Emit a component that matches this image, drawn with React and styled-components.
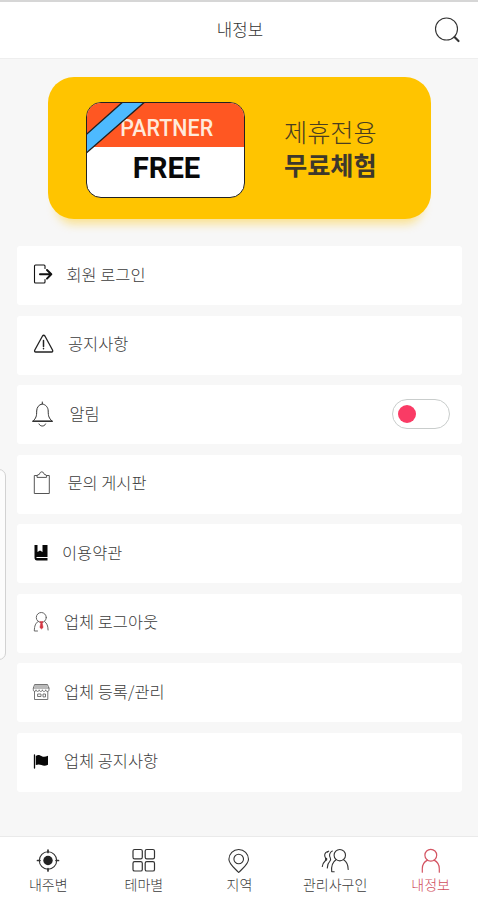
import React from "react";
import styled, { createGlobalStyle } from "styled-components";

const GlobalStyle = createGlobalStyle`
  * { box-sizing: border-box; }
  body {
    margin: 0;
    background: #f7f7f7;
    font-family: "Noto Sans CJK KR", "Noto Sans", sans-serif;
    font-weight: 300;
    color: #444;
  }
`;

const Screen = styled.div`
  position: relative;
  display: flex;
  flex-direction: column;
  width: 478px;
  height: 900px;
  overflow: hidden;
  background: #f7f7f7;
`;

const Header = styled.header`
  display: grid;
  grid-template-columns: 60px 1fr 60px;
  align-items: center;
  height: 59px;
  flex: none;
  background: #fff;
  border-top: 2px solid #d6d6d6;
  border-bottom: 1px solid #eeeeee;
`;

const Title = styled.h1`
  grid-column: 2;
  margin: 0;
  padding: 0 0 3px 2px;
  text-align: center;
  font-size: 16.8px;
  line-height: 24px;
  font-weight: 300;
  color: #333;
`;

const SearchButton = styled.button`
  display: flex;
  justify-content: flex-end;
  padding: 0 18px 0 0;
  border: 0;
  background: none;
`;

const Icon = styled.svg`
  display: block;
  flex: none;
  overflow: visible;
  fill: none;
  stroke: ${(p) => p.$color || "#333"};
  stroke-width: ${(p) => p.$stroke || 1.1};
  stroke-linecap: round;
  stroke-linejoin: round;
`;

const Main = styled.main`
  flex: 1;
  padding: 18px 16px 0 17px;
`;

const Banner = styled.section`
  display: flex;
  align-items: center;
  width: 383px;
  height: 142px;
  margin: 0 0 27px 31px;
  padding: 0 0 0 38px;
  border-radius: 26px;
  background: #ffc400;
  box-shadow: 0 13px 10px -8px rgba(255, 196, 0, 0.42);
`;

const Ticket = styled.div`
  position: relative;
  display: flex;
  flex-direction: column;
  width: 159px;
  height: 96px;
  margin-top: 3px;
  overflow: hidden;
  border: 1.5px solid #222;
  border-radius: 15px;
  background: #fff;
  font-family: Roboto, sans-serif;
  text-align: center;
`;

const TicketTop = styled.div`
  height: 44px;
  padding-left: 2px;
  background: #ff5722;
  color: #ffeadb;
  font-size: 23.4px;
  font-weight: 500;
  line-height: 51px;
`;

const Condensed = styled.span`
  display: inline-block;
  transform: scaleX(0.915);
`;

const TicketBottom = styled.div`
  flex: 1;
  padding-left: 2px;
  color: #090909;
  font-size: 29.2px;
  font-weight: 700;
  line-height: 43px;
`;

const Ribbon = styled.svg`
  position: absolute;
  left: -1px;
  top: -1px;
`;

const Offer = styled.div`
  margin-left: 39px;
  color: #4a3d20;
  font-size: 25.2px;
  line-height: 33px;
`;

const OfferStrong = styled.strong`
  display: block;
  font-weight: 700;
  color: #3d382c;
`;

const Menu = styled.ul`
  display: flex;
  flex-direction: column;
  gap: 10.5px;
  margin: 0;
  padding: 0;
  list-style: none;
`;

const MenuRow = styled.li`
  display: flex;
  align-items: center;
  height: 59px;
  padding: 0 12px 2px 15px;
  border-radius: 3px;
  background: #fff;
`;

const MenuLabel = styled.span`
  margin-left: ${(p) => p.$gap}px;
  padding-bottom: 2px;
  font-size: 16.4px;
  line-height: 24px;
  color: #3c3c3c;
`;

const Switch = styled.span`
  display: flex;
  align-items: center;
  width: 58px;
  height: 30px;
  margin-left: auto;
  padding-left: 5px;
  border: 1px solid #c9cdcc;
  border-radius: 15px;
  background: #fff;
`;

const Knob = styled.span`
  width: 18px;
  height: 18px;
  border-radius: 50%;
  background: #fa3b65;
`;

const EdgeHandle = styled.div`
  position: absolute;
  left: -8px;
  top: 469px;
  width: 14px;
  height: 191px;
  border: 1px solid #d2d2d2;
  border-radius: 7px;
  background: #fcfcfc;
`;

const BottomNav = styled.nav`
  display: flex;
  flex: none;
  height: 64px;
  border-top: 1px solid #eaeaea;
  background: #fff;
`;

const NavItem = styled.a`
  display: flex;
  flex: 1;
  flex-direction: column;
  align-items: center;
  padding: 11px 0 0 1px;
  color: ${(p) => (p.$active ? "#d04e5c" : "#3c3c3c")};
  font-size: 14px;
  line-height: 20px;
`;

const NavLabel = styled.span`
  white-space: nowrap;
`;

const SearchIcon = () => (
  <Icon width="26" height="26" viewBox="0 0 26 26">
    <circle cx="12.500" cy="12" r="11" />
    <path d="M20.500 20 24.500 24" strokeWidth="2.2" />
  </Icon>
);

const LoginIcon = () => (
  <Icon width="20" height="22" viewBox="0 0 20 22" $color="#111">
    <path d="M13 4.500V2Q13 1 12 1H3.500Q2.500 1 2.500 2v16Q2.500 19 3.500 19H12Q13 19 13 18v-2.500" />
    <path d="M8 10.300H19.300M15 6 19.300 10.300l-4.300 4.300" strokeWidth="2" />
  </Icon>
);

const NoticeIcon = () => (
  <Icon width="22" height="20" viewBox="0 0 22 20" $color="#222">
    <path d="M10.500 2Q11.700.500 12.900 2L20.500 16q.800 1.800-1 2H3.800q-1.800-.200-1-2Z" strokeWidth="1.300" />
    <path d="M11.500 6.500v6M11.500 14.600v.200" strokeWidth="1.500" />
  </Icon>
);

const BellIcon = () => (
  <Icon width="22" height="26" viewBox="0 0 22 26" $stroke="1">
    <path d="M10.300 1v2C6.800 3.500 4.700 6.500 4.700 10c0 5.500-.7 7-3.800 10.300h19.300C17 17 16.200 15.500 16.200 10c0-3.500-2.300-6.500-5.900-7" />
    <path d="M.900 20.300h19.300" strokeWidth="1.400" />
    <path d="M7 23c1.200 2.800 5.400 2.800 6.600 0" />
  </Icon>
);

const ClipboardIcon = () => (
  <Icon width="18" height="24" viewBox="0 0 18 24" $color="#555" $stroke="1">
    <path d="M5 4.500H2.300v18h15v-18h-2.700M5 6V5Q5 3.500 7.200 3.500 8 .800 9.800.800t2.600 2.700Q14.600 3.500 14.600 5v1Z" />
  </Icon>
);

const BookIcon = () => (
  <Icon width="16" height="18" viewBox="0 0 16 18" $color="none">
    <path d="M2.500 1h3v7L8 6.500 10.500 8V1h5v12h-11v1h11v2.500H5q-2.500 0-2.500-3Z" fill="#080808" />
  </Icon>
);

const PartnerIcon = () => (
  <Icon width="18" height="22" viewBox="0 0 18 22" $color="#666" $stroke="1">
    <circle cx="9.300" cy="6.500" r="5" />
    <path d="M6 10.500C3.500 12.500 2.500 14.500 2.300 20h3.200M12.600 10.500c2.500 2 3.300 4 3.500 8.500" />
    <path d="M8 10.500h3l-.7 2 .8 4-1.600 1.500-1.600-1.500.8-4Z" fill="#d33643" stroke="#d33643" strokeWidth=".5" />
  </Icon>
);

const StoreIcon = () => (
  <Icon width="18" height="18" viewBox="0 0 18 18" $color="#666" $stroke=".9">
    <path d="M3 1.500h12.500l1.500 4v1.300c0 2.200-3.300 2.200-3.300 0 0 2.200-3.300 2.200-3.300 0 0 2.200-3.200 2.200-3.200 0 0 2.200-3.200 2.200-3.200 0 0 2.200-2.700 2.200-2.700 0V5.500ZM1.500 5H17M2.500 8.500v8h13.300v-8M6 11h3v2.500H6ZM11 13.500V11h2.500v2.500ZM3 3h12" />
  </Icon>
);

const FlagIcon = () => (
  <Icon width="18" height="18" viewBox="0 0 18 18" $color="#080808">
    <path d="M2.500 3v13" strokeWidth="1.300" />
    <path d="M3.800 4c2.500-1.800 4-.800 6 .300 2 1 3.700.500 6.200-.500v9c-2.700 1.400-4.500 1.300-6.500.300-2-.900-3.500-1-5.700 0Z" fill="#080808" stroke="none" />
  </Icon>
);

const TargetIcon = () => (
  <Icon width="24" height="26" viewBox="0 0 24 26">
    <circle cx="12" cy="12.500" r="8.700" />
    <circle cx="12" cy="12.500" r="4.700" fill="#222" stroke="none" />
    <path d="M12 2v2.500M12 20.500v2.500M1.500 12.500h2.500M20 12.500h2.500" strokeWidth="1.700" />
  </Icon>
);

const GridIcon = () => (
  <Icon width="24" height="26" viewBox="0 0 24 26" $stroke="1.200">
    <rect x="1" y="1.500" width="9.300" height="9.300" rx="1.600" />
    <rect x="13.200" y="1.500" width="9.300" height="9.300" rx="1.600" />
    <rect x="1" y="13.700" width="9.300" height="9.300" rx="1.600" />
    <rect x="13.200" y="13.700" width="9.300" height="9.300" rx="1.600" />
  </Icon>
);

const PinIcon = () => (
  <Icon width="24" height="26" viewBox="0 0 24 26">
    <path d="M11.700 24.500C8.200 20.500 1.900 16.500 1.900 11.300a9.800 9.800 0 0 1 19.600 0C21.500 16.500 15.200 20.500 11.700 24.500Z" />
    <circle cx="11.700" cy="11" r="4.800" />
  </Icon>
);

const PeopleIcon = () => (
  <Icon width="28" height="26" viewBox="0 0 28 26">
    <circle cx="18.800" cy="7.200" r="5.700" />
    <path d="M15 11.800c-3 2-5 5-4.300 12h2.500M22.600 11.800c3 1.800 4.500 4.500 4.600 9.700" />
    <path d="M6.500 3.500C3.500 4.500 3 7.500 4.500 10c.8 1.500.5 2.500-.8 3.500C2 15 1.400 16.500 1.300 18.500M11.300 3C8.500 4.300 7.800 7.500 9.300 10c.8 1.500.5 2.500-.7 3.700-1.600 1.400-2.200 3.300-2.300 6.300M6.500 4.200l1.200-1.100" />
    <path d="M5.200 10.800v1" strokeWidth="2" />
  </Icon>
);

const PersonIcon = () => (
  <Icon width="24" height="26" viewBox="0 0 24 26" $color="#d45462" $stroke="1.200">
    <circle cx="11.800" cy="7.200" r="5.900" />
    <path d="M8.500 12.100C5.300 13.700 3.300 16.700 3.300 20.700v3.500M15.100 12.100c3.200 1.600 5.200 4.600 5.200 8.600v3.500" />
  </Icon>
);

const MENU = [
  { label: "회원 로그인", Glyph: LoginIcon, gap: 14.5 },
  { label: "공지사항", Glyph: NoticeIcon, gap: 14 },
  { label: "알림", Glyph: BellIcon, gap: 15.5, toggle: true },
  { label: "문의 게시판", Glyph: ClipboardIcon, gap: 17.5 },
  { label: "이용약관", Glyph: BookIcon, gap: 14 },
  { label: "업체 로그아웃", Glyph: PartnerIcon, gap: 14 },
  { label: "업체 등록/관리", Glyph: StoreIcon, gap: 14 },
  { label: "업체 공지사항", Glyph: FlagIcon, gap: 14 },
];

const NAV = [
  { label: "내주변", Glyph: TargetIcon },
  { label: "테마별", Glyph: GridIcon },
  { label: "지역", Glyph: PinIcon },
  { label: "관리사구인", Glyph: PeopleIcon },
  { label: "내정보", Glyph: PersonIcon, active: true },
];

export default function App() {
  return (
    <>
      <GlobalStyle />
      <Screen>
        <Header>
          <Title>내정보</Title>
          <SearchButton aria-label="검색">
            <SearchIcon />
          </SearchButton>
        </Header>
        <Main>
          <Banner>
            <Ticket>
              <TicketTop>
                <Condensed>PARTNER</Condensed>
              </TicketTop>
              <TicketBottom>FREE</TicketBottom>
              <Ribbon width="62" height="54" viewBox="0 0 62 54">
                <path d="M-2 34.500 39-2H61L-2 53Z" fill="#4dbaff" stroke="#222" strokeWidth="1.400" />
              </Ribbon>
            </Ticket>
            <Offer>
              제휴전용
              <OfferStrong>무료체험</OfferStrong>
            </Offer>
          </Banner>
          <Menu>
            {MENU.map(({ label, Glyph, gap, toggle }) => (
              <MenuRow key={label}>
                <Glyph />
                <MenuLabel $gap={gap}>{label}</MenuLabel>
                {toggle && (
                  <Switch role="switch" aria-checked="false">
                    <Knob />
                  </Switch>
                )}
              </MenuRow>
            ))}
          </Menu>
        </Main>
        <BottomNav>
          {NAV.map(({ label, Glyph, active }) => (
            <NavItem key={label} $active={active}>
              <Glyph />
              <NavLabel>{label}</NavLabel>
            </NavItem>
          ))}
        </BottomNav>
        <EdgeHandle />
      </Screen>
    </>
  );
}
